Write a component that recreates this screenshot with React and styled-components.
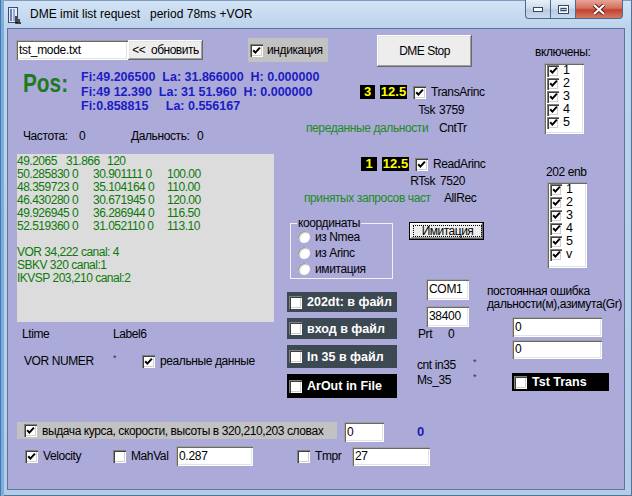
import React from "react";
import styled, { createGlobalStyle, css } from "styled-components";

const GlobalStyle = createGlobalStyle`
  html, body { margin: 0; padding: 0; background: #b9d1ea; }
  body { font-family: "Liberation Sans", Arial, sans-serif; font-size: 12px; color: #000; }
`;

const sunken = css`
  background: #fff;
  box-shadow: inset 1px 1px #a0a0a0, inset 2px 2px #696969, inset -1px -1px #fff, inset -2px -2px #e3e3e3;
`;

const Window = styled.div`
  width: 632px;
  height: 496px;
  box-sizing: border-box;
  display: flex;
  flex-direction: column;
  padding: 0 7px 6px 7px;
  background: linear-gradient(to bottom, #d3e3f4 0, #bcd3ec 28px, #b3cce8 100%);
  box-shadow: inset 1px 0 #52739a, inset 4px 0 #79aee2, inset -1px 0 #52739a, inset 0 -1px #52739a, inset 0 1px #7f9cc0;
`;

const TitleBar = styled.div`
  height: 28px;
  display: flex;
  align-items: flex-start;
  flex: none;
`;

const Title = styled.span`
  margin-left: 8px;
  line-height: 29px;
  font-size: 12px;
  white-space: pre;
`;

const CaptionButtons = styled.div`
  margin-left: auto;
  margin-right: 2px;
  display: flex;
`;

const CapBtn = styled.div`
  width: ${p => p.$w}px;
  height: 19px;
  box-sizing: border-box;
  border: 1px solid #4c6a8f;
  border-top: none;
  border-left-width: ${p => (p.$first ? 1 : 0)}px;
  border-radius: ${p => (p.$first ? "0 0 0 4px" : p.$close ? "0 0 4px 0" : "0")};
  background: ${p =>
    p.$close
      ? "linear-gradient(to bottom, #e7a597 0%, #d6705f 45%, #c2422f 55%, #d37a66 100%)"
      : "linear-gradient(to bottom, #e8eff8 0%, #cfdcec 45%, #b8cbe2 55%, #c9daee 100%)"};
  display: flex;
  align-items: center;
  justify-content: center;
`;

const Client = styled.div`
  flex: 1;
  display: flex;
  flex-direction: column;
  background: #abaad9;
  border: 1px solid #5b7698;
  overflow: hidden;
`;

/* ---- form regions ---- */

const TopArea = styled.div`
  display: flex;
  height: 393px;
  flex: none;
`;

const MainArea = styled.div`
  width: 479px;
  display: flex;
  flex-direction: column;
`;

const HeaderRow = styled.div`
  height: 38px;
  box-sizing: border-box;
  padding: 6px 0 0 8px;
  display: flex;
  align-items: flex-start;
`;

const FileRow = styled.div`
  display: flex;
  align-items: center;
  height: 24px;
  margin-top: 3px;
`;

const Body = styled.div`
  display: flex;
  flex: 1;
`;

const LeftCol = styled.div`
  width: 279px;
  box-sizing: border-box;
  padding: 1px 0 0 9px;
  display: flex;
  flex-direction: column;
  align-items: flex-start;
`;

const MidCol = styled.div`
  width: 200px;
  padding-top: 18px;
  display: flex;
  flex-direction: column;
  align-items: flex-start;
`;

const RightCol = styled.div`
  flex: 1;
  padding-top: 16px;
  display: flex;
  flex-direction: column;
  align-items: flex-start;
`;

const BottomArea = styled.div`
  display: flex;
  flex-direction: column;
  gap: 3px;
  padding-left: 9px;
`;

/* ---- text ---- */

const Text = styled.span`
  line-height: 14px;
  white-space: pre;
  font-size: ${p => p.$size || 12}px;
  font-weight: ${p => (p.$bold ? 700 : 400)};
  color: ${p => p.$color || "#000"};
  letter-spacing: ${p => (p.$bold ? 0 : -0.4)}px;
  justify-self: ${p => (p.$right ? "end" : "start")};
  padding-left: ${p => p.$pad || 0}px;
`;

const Star = styled.span`
  align-self: start;
  line-height: 9px;
  font-size: 9px;
  color: #333;
`;

const PosBlock = styled.div`
  display: flex;
  align-items: flex-start;
  height: 46px;
  padding-left: 6px;
`;

const PosLabel = styled.span`
  width: 58px;
  line-height: 30px;
  font-size: 26px;
  font-weight: 700;
  color: #1d7a1d;
  transform: scaleX(0.8);
  transform-origin: left center;
`;

const Coords = styled.div`
  padding-top: 2px;
  font-size: 12.5px;
  font-weight: 700;
  line-height: 14.5px;
  color: #1c1cc4;
  white-space: pre;
`;

const FreqRow = styled.div`
  margin-top: 15px;
  padding-left: 6px;
  display: grid;
  grid-template-columns: 56px 52px 66px auto;
`;

const InfoGrid = styled.div`
  margin-top: 5px;
  padding-left: 5px;
  display: grid;
  grid-template-columns: 91px 29px auto;
  grid-auto-rows: 14px;
  row-gap: 13px;
  align-items: center;
`;

/* ---- controls ---- */

const Edit = styled.div`
  ${sunken}
  flex: none;
  width: ${p => p.$w}px;
  height: ${p => p.$h}px;
  box-sizing: border-box;
  padding-left: 3px;
  line-height: ${p => p.$h}px;
  font-size: 12px;
  letter-spacing: -0.3px;
  white-space: pre;
`;

const Button = styled.div`
  flex: none;
  width: ${p => p.$w}px;
  height: ${p => p.$h}px;
  box-sizing: border-box;
  background: #ededed;
  box-shadow: inset -1px -1px #696969, inset 1px 1px #fff, inset -2px -2px #a0a0a0, inset 2px 2px #e3e3e3;
  display: flex;
  align-items: center;
  justify-content: center;
  font-size: 12px;
  letter-spacing: -0.5px;
  white-space: pre;
`;

const StopButton = styled(Button)`
  margin-left: 49px;
`;

const DefaultButton = styled(Button)`
  margin-left: 16px;
  border: 1px solid #000;
  box-shadow: inset -1px -1px #696969, inset 1px 1px #fff, inset -2px -2px #a0a0a0;
  align-items: stretch;
  padding: 2px 1px 2px 3px;
`;

const Focus = styled.span`
  flex: 1;
  border: 1px dotted #000;
  display: flex;
  align-items: center;
  justify-content: center;
`;

const Box = styled.span`
  width: ${p => p.$s}px;
  height: ${p => p.$s}px;
  flex: none;
  box-sizing: border-box;
  background: #fff;
  box-shadow: inset 1px 1px #808080, inset 2px 2px #404040, inset -1px -1px #fff, inset -2px -2px #d4d0c8;
  display: flex;
  align-items: center;
  justify-content: center;
`;

const Check = ({ on, s = 13 }) => (
  <Box $s={s}>
    {on && (
      <svg width="9" height="9" viewBox="0 0 9 9">
        <path d="M1.2 4.2 L3.4 6.6 L7.9 1.6" fill="none" stroke="#000" strokeWidth="2" />
      </svg>
    )}
  </Box>
);

const CheckField = styled.div`
  display: flex;
  align-items: center;
  gap: 5px;
  height: 13px;
  white-space: pre;
  letter-spacing: -0.4px;
`;

const Panel = styled.div`
  flex: none;
  width: ${p => p.$w}px;
  height: ${p => p.$h}px;
  box-sizing: border-box;
  background: #c2c2c2;
  display: flex;
  align-items: center;
  gap: ${p => p.$gap ?? 5}px;
  padding-left: ${p => p.$pad ?? 2}px;
  white-space: pre;
  letter-spacing: -0.4px;
`;

const IndPanel = styled(Panel)`
  margin-left: 45px;
`;

const DarkPanel = styled(Panel)`
  background: ${p => (p.$black ? "#000" : "#3c4852")};
  color: #fff;
  font-weight: 700;
  font-size: 12.5px;
  letter-spacing: 0;
`;

const DarkColumn = styled.div`
  margin-top: 13px;
  display: flex;
  flex-direction: column;
  gap: 6px;
`;

const Memo = styled.div`
  margin-top: 11px;
  width: 257px;
  height: 168px;
  box-sizing: border-box;
  padding-top: 1px;
  background: #dcdcdc;
  color: #0b7a0b;
  font-size: 12px;
  letter-spacing: -0.5px;
`;

const MemoRow = styled.div`
  display: grid;
  grid-template-columns: ${p => p.$cols || "1fr"};
  height: 13px;
  line-height: 13px;
  white-space: pre;
`;

const StatusBlock = styled.div`
  margin: ${p => p.$top || 0}px 0 0 17px;
  display: grid;
  grid-template-columns: 131px auto;
  column-gap: 4px;
  row-gap: ${p => p.$rowGap}px;
  grid-auto-rows: 14px;
  align-items: center;
`;

const BadgeRow = styled.div`
  grid-column: 1 / -1;
  display: flex;
  align-items: center;
  padding-left: ${p => p.$pad}px;
  gap: 5px;
`;

const Badge = styled.span`
  width: ${p => p.$w}px;
  height: 14px;
  margin-right: ${p => p.$mr || 0}px;
  background: #000;
  color: #ffff00;
  font-weight: 700;
  font-size: 13px;
  line-height: 14px;
  text-align: center;
`;

const ListBlock = styled.div`
  margin-top: ${p => p.$top || 0}px;
  padding-left: ${p => p.$pad}px;
  display: flex;
  flex-direction: column;
  align-items: flex-start;
  gap: ${p => p.$gap}px;
`;

const CheckList = styled.div`
  ${sunken}
  margin-left: ${p => p.$indent}px;
  width: 40px;
  height: ${p => p.$h}px;
  box-sizing: border-box;
  padding: 1px 0 0 3px;
`;

const ListItem = styled.div`
  display: flex;
  align-items: center;
  gap: 4px;
  height: 13px;
  font-size: 12.5px;
  line-height: 13px;
`;

const GroupRow = styled.div`
  margin-top: 17px;
  display: flex;
  align-items: flex-start;
`;

const Group = styled.div`
  position: relative;
  margin: 1px 0 0 3px;
  width: 103px;
  height: 56px;
  box-sizing: border-box;
  border: 1px solid #f2f2f2;
  padding: 5px 0 0 7px;
  display: flex;
  flex-direction: column;
`;

const Legend = styled.span`
  position: absolute;
  left: 6px;
  top: -8px;
  line-height: 14px;
  padding: 0 1px;
  background: #abaad9;
  letter-spacing: -0.4px;
`;

const RadioRow = styled.div`
  display: flex;
  align-items: center;
  gap: 5px;
  height: 16px;
  letter-spacing: -0.4px;
`;

const Radio = styled.span`
  width: 12px;
  height: 12px;
  border-radius: 50%;
  background: #fff;
  box-shadow: inset 1px 1px 0 #9a9a9a, inset 2px 2px 1px #d0d0d0;
`;

const LowerRow = styled.div`
  display: flex;
  align-items: flex-start;
`;

const PortColumn = styled.div`
  margin-left: 20px;
  display: flex;
  flex-direction: column;
  align-items: flex-start;
`;

const PortEdits = styled.div`
  padding-left: 9px;
  display: flex;
  flex-direction: column;
  gap: 6px;
`;

const PairRow = styled.div`
  display: grid;
  grid-template-columns: ${p => p.$cols};
  grid-auto-rows: ${p => p.$row}px;
  row-gap: 1px;
  margin-top: ${p => p.$top || 0}px;
  padding-left: ${p => p.$pad || 0}px;
  align-items: center;
  line-height: ${p => p.$row}px;
`;

const ErrorBlock = styled.div`
  margin-top: 17px;
  display: flex;
  flex-direction: column;
`;

const Note = styled.div`
  line-height: 13px;
  white-space: pre;
  letter-spacing: -0.4px;
`;

const ErrorInputs = styled.div`
  margin-top: 6px;
  padding-left: 25px;
  display: flex;
  flex-direction: column;
  gap: 3px;
`;

const TstTrans = styled(DarkPanel)`
  margin-top: 11px;
`;

const BottomRow = styled.div`
  display: flex;
  align-items: flex-start;
  gap: 7px;
`;

const BlueZero = styled.span`
  margin-left: 26px;
  line-height: 20px;
  font-size: 13px;
  font-weight: 700;
  color: #1c1cb4;
`;

const OptionRow = styled.div`
  height: 22px;
  padding-left: 8px;
  display: grid;
  grid-template-columns: 88px 63px 121px 55px auto;
  align-items: center;
`;

const AppIcon = () => (
  <svg width="14" height="17" viewBox="0 0 14 17" style={{ marginTop: 7, marginLeft: 1 }}>
    <rect x="0.5" y="0.5" width="9" height="15" fill="#e8eef8" stroke="#3a4d7a" />
    <rect x="2" y="2" width="2" height="12" fill="#6b7fb8" />
    <rect x="5" y="2" width="2" height="12" fill="#9aa8d4" />
    <path d="M8 9 L8 16 L13 16" fill="none" stroke="#111" strokeWidth="1.5" />
    <rect x="9" y="12" width="3" height="3" fill="#4a4a4a" />
  </svg>
);

const memoData = [
  ["50.285830 0", "30.901111 0", "100.00"],
  ["48.359723 0", "35.104164 0", "110.00"],
  ["46.430280 0", "30.671945 0", "120.00"],
  ["49.926945 0", "36.286944 0", "116.50"],
  ["52.519360 0", "31.052110 0", "113.10"],
];

const CheckListBox = ({ items, h, indent }) => (
  <CheckList $h={h} $indent={indent}>
    {items.map(n => (
      <ListItem key={n}>
        <Check on s={12} />
        {n}
      </ListItem>
    ))}
  </CheckList>
);

const App = () => (
  <Window>
    <GlobalStyle />
    <TitleBar>
      <AppIcon />
      <Title>DME imit list request   period 78ms +VOR</Title>
      <CaptionButtons>
        <CapBtn $w={26} $first>
          <svg width="10" height="5" viewBox="0 0 10 5">
            <rect x="0.5" y="0.5" width="9" height="4" fill="#fff" stroke="#33475f" />
          </svg>
        </CapBtn>
        <CapBtn $w={25}>
          <svg width="11" height="9" viewBox="0 0 11 9">
            <rect x="0.5" y="0.5" width="10" height="8" fill="none" stroke="#33475f" />
            <rect x="1.5" y="1.5" width="8" height="6" fill="none" stroke="#fff" />
            <rect x="3" y="3.5" width="5" height="2" fill="none" stroke="#33475f" />
          </svg>
        </CapBtn>
        <CapBtn $w={47} $close>
          <svg width="14" height="11" viewBox="0 0 14 11">
            <path d="M2 1 L12 10 M12 1 L2 10" stroke="#5a1d15" strokeWidth="4" />
            <path d="M2 1 L12 10 M12 1 L2 10" stroke="#fff" strokeWidth="2.2" />
          </svg>
        </CapBtn>
      </CaptionButtons>
    </TitleBar>

    <Client>
      <TopArea>
        <MainArea>
          <HeaderRow>
            <FileRow>
              <Edit $w={112} $h={20}>tst_mode.txt</Edit>
              <Button $w={75} $h={20}>{"<<  обновить"}</Button>
              <IndPanel $w={80} $h={24} $gap={4}>
                <Check on />
                индикация
              </IndPanel>
            </FileRow>
            <StopButton $w={95} $h={32}>DME Stop</StopButton>
          </HeaderRow>

          <Body>
            <LeftCol>
              <PosBlock>
                <PosLabel>Pos:</PosLabel>
                <Coords>
                  {"Fi:49.206500  La: 31.866000  H: 0.000000\n"}
                  {"Fi:49 12.390  La: 31 51.960  H: 0.000000\n"}
                  {"Fi:0.858815     La: 0.556167"}
                </Coords>
              </PosBlock>

              <FreqRow>
                <Text>Частота:</Text>
                <Text>0</Text>
                <Text>Дальность:</Text>
                <Text>0</Text>
              </FreqRow>

              <Memo>
                <MemoRow $cols="49px 41px 1fr">
                  <span>49.2065</span>
                  <span>31.866</span>
                  <span>120</span>
                </MemoRow>
                {memoData.map(r => (
                  <MemoRow key={r[0]} $cols="76px 74px 1fr">
                    {r.map(c => (
                      <span key={c}>{c}</span>
                    ))}
                  </MemoRow>
                ))}
                <MemoRow> </MemoRow>
                <MemoRow>VOR 34,222 canal: 4</MemoRow>
                <MemoRow>SBKV 320 canal:1</MemoRow>
                <MemoRow>IKVSP 203,210 canal:2</MemoRow>
              </Memo>

              <InfoGrid>
                <Text>Ltime</Text>
                <Text>Label6</Text>
                <span />
                <Text $pad={2}>VOR NUMER</Text>
                <Star>*</Star>
                <CheckField>
                  <Check on />
                  реальные данные
                </CheckField>
              </InfoGrid>
            </LeftCol>

            <MidCol>
              <StatusBlock $rowGap={4}>
                <BadgeRow $pad={56}>
                  <Badge $w={15}>3</Badge>
                  <Badge $w={27} $mr={1}>12.5</Badge>
                  <CheckField>
                    <Check on />
                    TransArinc
                  </CheckField>
                </BadgeRow>
                <Text $right>Tsk</Text>
                <Text>3759</Text>
                <Text $color="#228b22" $pad={2}>переданные дальности</Text>
                <Text>CntTr</Text>
              </StatusBlock>

              <StatusBlock $rowGap={3} $top={22}>
                <BadgeRow $pad={57}>
                  <Badge $w={16}>1</Badge>
                  <Badge $w={27} $mr={1}>12.5</Badge>
                  <CheckField>
                    <Check on />
                    ReadArinc
                  </CheckField>
                </BadgeRow>
                <Text $right>RTsk</Text>
                <Text $pad={1}>7520</Text>
                <Text $color="#228b22">принятых запросов част</Text>
                <Text $pad={5}>AllRec</Text>
              </StatusBlock>

              <GroupRow>
                <Group>
                  <Legend>координаты</Legend>
                  {["из Nmea", "из Arinc", "имитация"].map(t => (
                    <RadioRow key={t}>
                      <Radio />
                      {t}
                    </RadioRow>
                  ))}
                </Group>
                <DefaultButton $w={75} $h={18}>
                  <Focus>Имитация</Focus>
                </DefaultButton>
              </GroupRow>

              <LowerRow>
                <DarkColumn>
                  <DarkPanel $w={110} $h={20}>
                    <Check />
                    202dt: в файл
                  </DarkPanel>
                  <DarkPanel $w={110} $h={21}>
                    <Check />
                    вход в файл
                  </DarkPanel>
                  <DarkPanel $w={110} $h={23}>
                    <Check />
                    In 35 в файл
                  </DarkPanel>
                  <DarkPanel $w={110} $h={24} $black>
                    <Check />
                    ArOut in File
                  </DarkPanel>
                </DarkColumn>

                <PortColumn>
                  <PortEdits>
                    <Edit $w={43} $h={21}>COM1</Edit>
                    <Edit $w={43} $h={21}>38400</Edit>
                  </PortEdits>
                  <PairRow $cols="30px auto" $row={13} $pad={1}>
                    <Text>Prt</Text>
                    <Text>0</Text>
                  </PairRow>
                  <PairRow $cols="56px auto" $row={14} $top={18}>
                    <Text>cnt in35</Text>
                    <Star>*</Star>
                    <Text>Ms_35</Text>
                    <Star>*</Star>
                  </PairRow>
                </PortColumn>
              </LowerRow>
            </MidCol>
          </Body>
        </MainArea>

        <RightCol>
          <ListBlock $pad={48} $gap={4}>
            <Text>включены:</Text>
            <CheckListBox items={["1", "2", "3", "4", "5"]} h={71} indent={9} />
          </ListBlock>

          <ListBlock $pad={59} $gap={3} $top={31}>
            <Text>202 enb</Text>
            <CheckListBox items={["1", "2", "3", "4", "5", "v"]} h={86} indent={1} />
          </ListBlock>

          <ErrorBlock>
            <Note>
              {"постоянная ошибка\n"}
              {"дальности(м),азимута(Gr)"}
            </Note>
            <ErrorInputs>
              <Edit $w={90} $h={20}>0</Edit>
              <Edit $w={90} $h={19}>0</Edit>
              <TstTrans $w={97} $h={18} $black>
                <Check />
                Tst Trans
              </TstTrans>
            </ErrorInputs>
          </ErrorBlock>
        </RightCol>
      </TopArea>

      <BottomArea>
        <BottomRow>
          <Panel $w={320} $h={17} $pad={7}>
            <Check on />
            выдача курса, скорости, высоты в 320,210,203 словах
          </Panel>
          <Edit $w={40} $h={20}>0</Edit>
          <BlueZero>0</BlueZero>
        </BottomRow>

        <OptionRow>
          <CheckField>
            <Check on />
            Velocity
          </CheckField>
          <CheckField>
            <Check />
            MahVal
          </CheckField>
          <Edit $w={77} $h={20}>0.287</Edit>
          <CheckField>
            <Check />
            Tmpr
          </CheckField>
          <Edit $w={78} $h={19}>27</Edit>
        </OptionRow>
      </BottomArea>
    </Client>
  </Window>
);

export default App;
